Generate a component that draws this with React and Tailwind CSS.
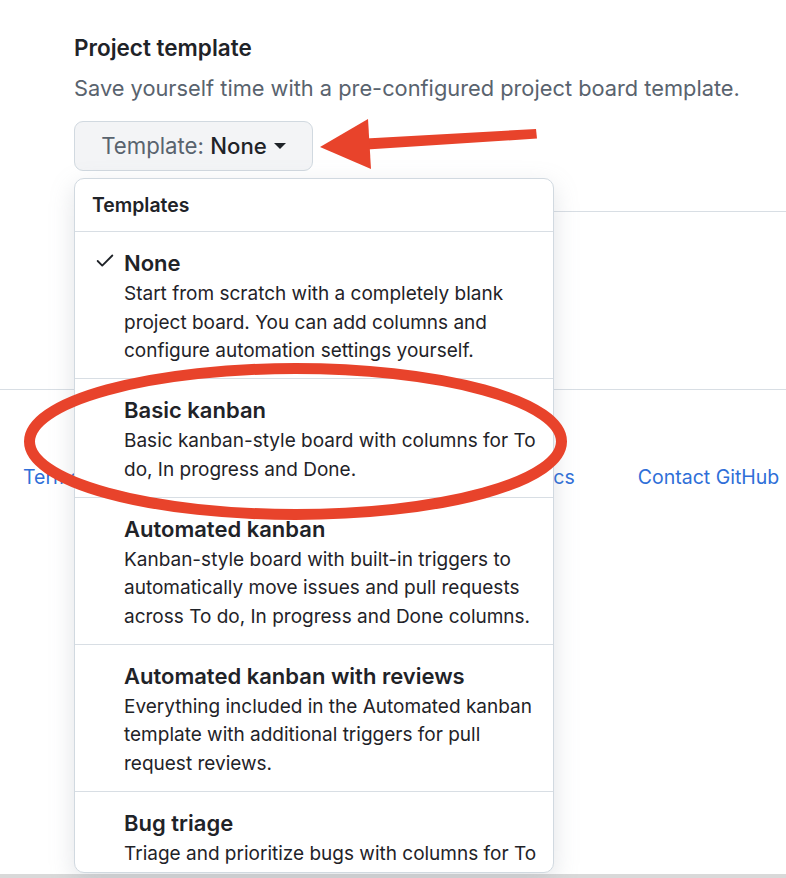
import { Check } from "lucide-react";

const templates = [
  {
    title: "None",
    checked: true,
    lines: [
      "Start from scratch with a completely blank",
      "project board. You can add columns and",
      "configure automation settings yourself.",
    ],
  },
  {
    title: "Basic kanban",
    lines: ["Basic kanban-style board with columns for To", "do, In progress and Done."],
  },
  {
    title: "Automated kanban",
    lines: [
      "Kanban-style board with built-in triggers to",
      "automatically move issues and pull requests",
      "across To do, In progress and Done columns.",
    ],
  },
  {
    title: "Automated kanban with reviews",
    lines: [
      "Everything included in the Automated kanban",
      "template with additional triggers for pull",
      "request reviews.",
    ],
  },
  {
    title: "Bug triage",
    lines: ["Triage and prioritize bugs with columns for To"],
  },
];

const footerLinks = ["Terms", "Privacy", "Security", "Status", "Docs"];

const TemplateItem = ({ item, last }) => (
  <div className={`flex pl-[19px] pr-4 pt-4 pb-[12px] ${last ? "" : "border-b border-[#d8dee4]"}`}>
    <div className="w-[30px] pt-[2px] shrink-0">
      {item.checked && <Check size={22} strokeWidth={2} className="text-[#1f2328]" />}
    </div>
    <div>
      <div className="text-[22px] leading-[30px] font-semibold text-[#1f2328]">{item.title}</div>
      <div className="mt-[2px] text-[19px] leading-[28.7px] text-[#1f2328]">
        {item.lines.map((l) => (
          <div key={l} className="whitespace-nowrap">
            {l}
          </div>
        ))}
      </div>
    </div>
  </div>
);

export default function App() {
  return (
    <div
      className="relative w-[786px] h-[878px] overflow-hidden bg-white"
      style={{ fontFamily: "Inter, 'Noto Sans', sans-serif" }}
    >
      {/* page content */}
      <div className="ml-[74px] pt-[33px] pb-[40px] border-b border-[#d8dee4]">
        <h2 className="text-[22.5px] leading-[30px] font-semibold text-[#1f2328]">Project template</h2>
        <p className="mt-[10px] text-[21.8px] leading-[30px] text-[#59636e] whitespace-nowrap">
          Save yourself time with a pre-configured project board template.
        </p>
        <button className="mt-[18px] h-[50px] w-[239px] flex items-center justify-center gap-[7px] rounded-[9px] border border-[#d1d9e0] bg-[#f3f4f6] text-[22.2px]">
          <span>
            <span className="text-[#59636e]">Template: </span>
            <span className="text-[#1f2328] font-medium">None</span>
          </span>
          <span className="w-0 h-0 border-l-[6px] border-r-[6px] border-t-[6px] border-l-transparent border-r-transparent border-t-[#1f2328]" />
        </button>
      </div>

      <footer className="mt-[177px] border-t border-[#d8dee4] pt-[75px] pl-[23px] flex items-center text-[19.5px] leading-6 text-[#2f6fd8]">
        <div className="flex gap-[61px]">
          {footerLinks.map((l) => (
            <a key={l}>{l}</a>
          ))}
        </div>
        <a className="ml-[63px] whitespace-nowrap">Contact GitHub</a>
      </footer>

      <div className="absolute left-0 right-0 bottom-0 h-[4px] bg-[#d9d9d9]" />

      {/* dropdown menu */}
      <div className="absolute left-[74px] top-[178px] w-[480px] h-[695px] overflow-hidden rounded-[10px] border border-[#d1d9e0] bg-white shadow-[0_8px_24px_rgba(140,149,159,0.25)]">
        <div className="h-[53px] pl-[17px] pt-[14px] border-b border-[#d8dee4] text-[19.4px] leading-6 font-semibold text-[#1f2328]">
          Templates
        </div>
        {templates.map((t, i) => (
          <TemplateItem key={t.title} item={t} last={i === templates.length - 1} />
        ))}
      </div>

      {/* annotations */}
      <svg className="absolute inset-0 pointer-events-none" width="786" height="878" viewBox="0 0 786 878">
        <polygon points="366,138.5 536,129 537,138.5 367,149.5" fill="#e8432b" />
        <polygon points="320,147 368,119 371,169" fill="#e8432b" />
        <ellipse cx="295.5" cy="441.5" rx="266" ry="73" fill="none" stroke="#e8432b" strokeWidth="11" />
      </svg>
    </div>
  );
}
